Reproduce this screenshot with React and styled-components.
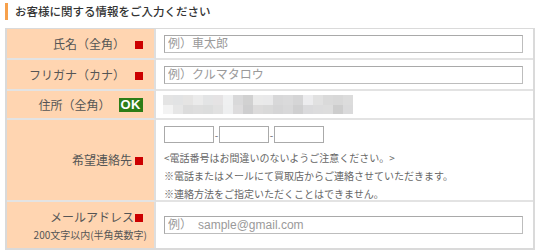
import React from "react";
import styled, { createGlobalStyle } from "styled-components";

const Global = createGlobalStyle`
  html, body { margin: 0; padding: 0; background: #fff; }
  body { font-family: "Noto Sans CJK JP", "Noto Sans", sans-serif; color: #555; }
`;

const Page = styled.div`
  width: 540px;
  padding: 3px 5px 0 5px;
  box-sizing: border-box;
`;

const Heading = styled.h2`
  margin: 0 0 8px 0;
  border-left: 3px solid #f7a14c;
  padding-left: 7px;
  height: 17px;
  font-size: 11.5px;
  line-height: 17px;
  font-weight: 500;
  color: #333;
`;

const Table = styled.div`
  display: grid;
  grid-template-columns: 149px 1fr;
  border: 1px solid #dadada;
  border-left-width: 2px;
  border-right-width: 2px;
  border-bottom-width: 2px;
  width: 530px;
  box-sizing: border-box;
`;

const Label = styled.div`
  background: #ffd5b1;
  border-right: 2px solid #dedede;
  border-bottom: ${(p) => (p.$last ? "none" : "2px solid #e3e3e3")};
  height: ${(p) => p.$h}px;
  box-sizing: border-box;
  display: flex;
  flex-direction: column;
  align-items: flex-end;
  justify-content: center;
  padding-right: 11px;
  font-size: 12px;
  color: #555;
`;

const LabelLine = styled.div`
  display: flex;
  align-items: center;
  gap: ${(p) => p.$gap ?? 10}px;
  line-height: 16px;
`;

const Sub = styled.div`
  font-size: 10px;
  line-height: 14px;
  margin-top: 3px;
  margin-right: -4px;
  color: #555;
`;

const Req = styled.span`
  width: 8px;
  height: 8px;
  background: #cc0000;
  display: inline-block;
  margin-top: 2px;
`;

const Ok = styled.span`
  background: #2d7d17;
  color: #fff;
  font-family: "Liberation Sans", Arial, sans-serif;
  font-weight: bold;
  font-size: 13px;
  line-height: 14px;
  padding: 0 2px;
  height: 14px;
  letter-spacing: 0.5px;
`;

const Cell = styled.div`
  border-bottom: ${(p) => (p.$last ? "none" : "2px solid #e3e3e3")};
  height: ${(p) => p.$h}px;
  box-sizing: border-box;
  display: flex;
  flex-direction: column;
  justify-content: ${(p) => p.$justify || "center"};
  padding: ${(p) => p.$pad || "0 10px 0 8px"};
`;

const TextInput = styled.input`
  width: 359px;
  height: 18px;
  box-sizing: border-box;
  border: 1px solid #bdbdbd;
  border-top-color: #a9a9a9;
  border-left-color: #a9a9a9;
  font-family: "Liberation Sans", "Noto Sans CJK JP", sans-serif;
  font-size: 12px;
  padding: 0 3px;
  outline: none;
  &::placeholder { color: #9a9a9a; }
`;

const PhoneRow = styled.div`
  display: flex;
  align-items: center;
`;

const PhoneInput = styled.input`
  width: 50px;
  height: 17px;
  box-sizing: border-box;
  border: 1px solid #aaa;
  padding: 0;
  outline: none;
`;

const Dash = styled.span`
  width: 5px;
  text-align: center;
  font-size: 10px;
  color: #666;
`;

const Notes = styled.div`
  margin-top: 6px;
  font-size: 10px;
  line-height: 18px;
  color: #666;
`;

const Mosaic = styled.div`
  display: grid;
  grid-template-columns: repeat(19, 10px);
  grid-auto-rows: 9.5px;
  width: 190px;
  margin-left: -1px;
`;

const Tile = styled.div`
  background: ${(p) => p.$c};
`;

const mosaic = [
  "#e4e4e4","#e2e3e4","#e5e4e3","#ebebeb","#e3e4e5","#e5e3e4","#eff0f1","#d9d9da","#d1d1d1","#eaeaea","#e9e9ea","#d8d8d9","#dadadb","#d5d5d6","#ececee","#e1e1e1","#dadada","#d8d8d8","#dcdcdc",
  "#f3f3f3","#e6e6e6","#dcdcdc","#dedede","#dcdddd","#e1e1e1","#eeeff0","#dddcdd","#cececf","#dcdbdb","#d9d9d9","#d5d5d6","#d8d8d9","#cfcfd0","#dadadc","#dcdcdd","#dddddd","#cdcdcd","#dadadb",
];

export default function App() {
  return (
    <Page>
      <Global />
      <Heading>お客様に関する情報をご入力ください</Heading>
      <Table>
        <Label $h={31}>
          <LabelLine>氏名（全角）<Req /></LabelLine>
        </Label>
        <Cell $h={31}>
          <TextInput placeholder="例）車太郎" />
        </Cell>

        <Label $h={31}>
          <LabelLine>フリガナ（カナ）<Req /></LabelLine>
        </Label>
        <Cell $h={31}>
          <TextInput placeholder="例）クルマタロウ" />
        </Cell>

        <Label $h={29}>
          <LabelLine $gap={8}>住所（全角）<Ok>OK</Ok></LabelLine>
        </Label>
        <Cell $h={29}>
          <Mosaic>
            {mosaic.map((c, i) => (
              <Tile key={i} $c={c} />
            ))}
          </Mosaic>
        </Cell>

        <Label $h={82}>
          <LabelLine $gap={3}>希望連絡先<Req /></LabelLine>
        </Label>
        <Cell $h={82} $justify="flex-start" $pad="6px 10px 0 8px">
          <PhoneRow>
            <PhoneInput />
            <Dash>-</Dash>
            <PhoneInput />
            <Dash>-</Dash>
            <PhoneInput />
          </PhoneRow>
          <Notes>
            &lt;電話番号はお間違いのないようご注意ください。&gt;
            <br />
            ※電話またはメールにて買取店からご連絡させていただきます。
            <br />
            ※連絡方法をご指定いただくことはできません。
          </Notes>
        </Cell>

        <Label $h={46} $last>
          <LabelLine $gap={1}>メールアドレス<Req /></LabelLine>
          <Sub>200文字以内(半角英数字)</Sub>
        </Label>
        <Cell $h={46} $last>
          <TextInput placeholder="例）　sample@gmail.com" />
        </Cell>
      </Table>
    </Page>
  );
}
